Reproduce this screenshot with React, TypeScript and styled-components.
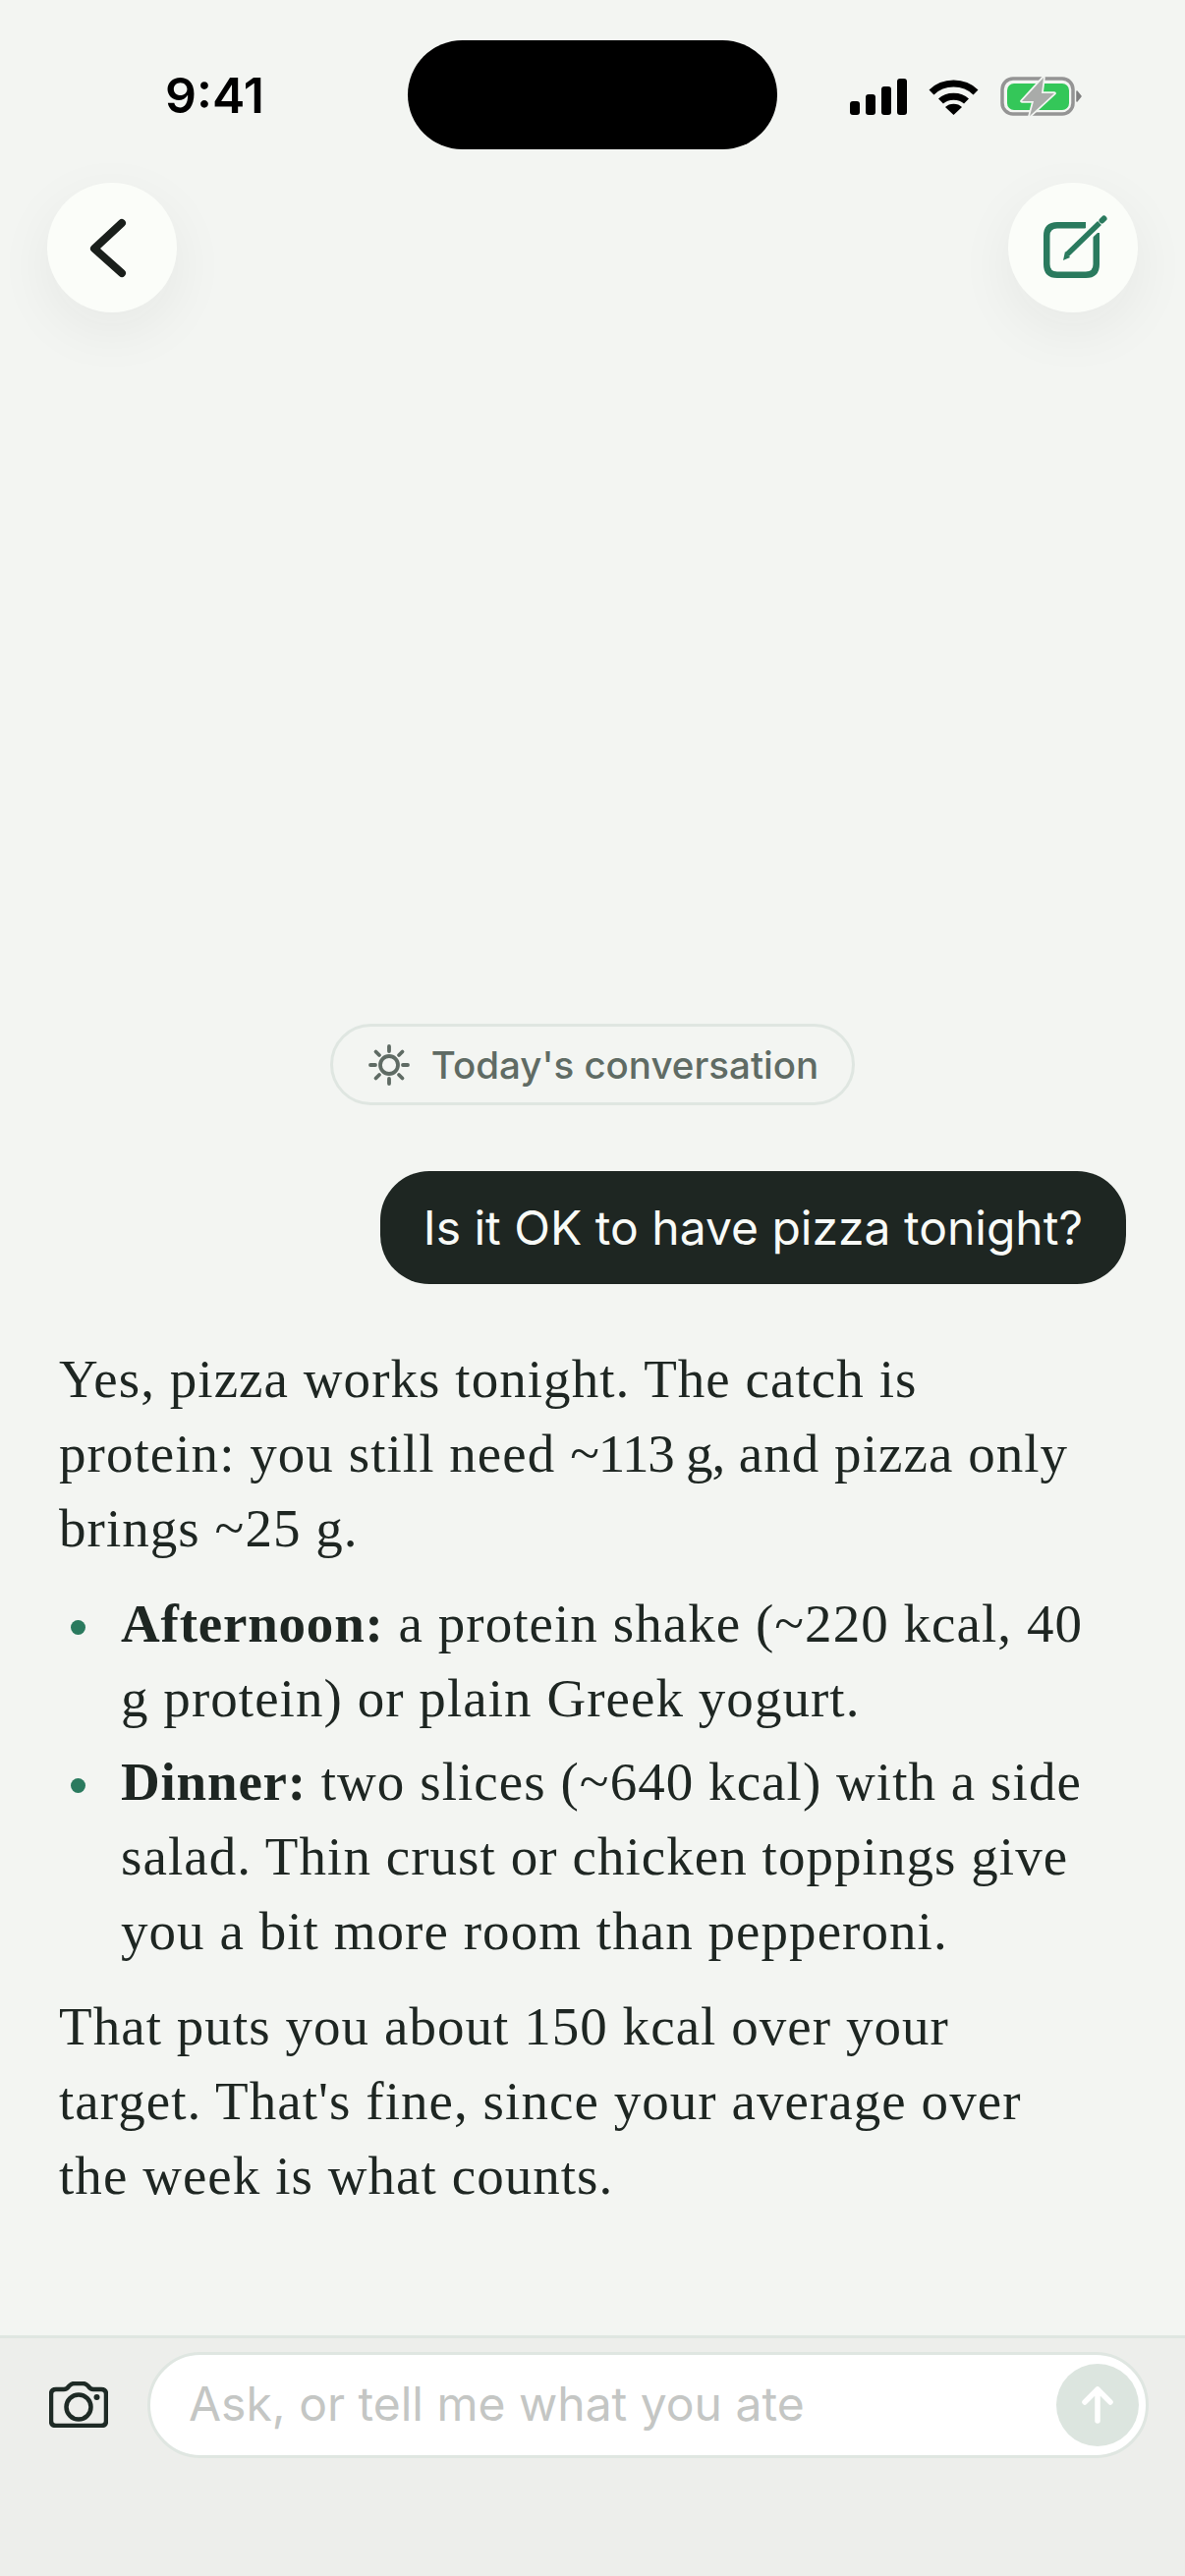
import * as React from 'react';
import styled, { createGlobalStyle } from 'styled-components';

const GlobalStyle = createGlobalStyle`
  html,
  body {
    margin: 0;
    padding: 0;
    background: #f3f5f2;
  }
`;

const Screen = styled.div`
  position: relative;
  display: flex;
  flex-direction: column;
  width: 1206px;
  height: 2622px;
  overflow: hidden;
  background: #f3f5f2;
  font-family: Inter, 'Noto Sans', sans-serif;
  color: #1e2622;
`;

const StatusBar = styled.div`
  display: flex;
  align-items: flex-start;
  justify-content: space-between;
  height: 186px;
  padding: 67px 104px 0 168px;
  box-sizing: border-box;
  flex-shrink: 0;
`;

const Time = styled.span`
  font-size: 50px;
  line-height: 60px;
  font-weight: 600;
  color: #000;
`;

const Island = styled.div`
  position: absolute;
  top: 41px;
  left: 415px;
  width: 376px;
  height: 111px;
  border-radius: 56px;
  background: #000;
`;

const StatusIcons = styled.div`
  display: flex;
  align-items: center;
  gap: 22px;
  margin-top: 10px;
`;

const Nav = styled.div`
  display: flex;
  justify-content: space-between;
  padding: 0 48px;
  flex-shrink: 0;
`;

const RoundButton = styled.button`
  display: flex;
  align-items: center;
  justify-content: center;
  width: 132px;
  height: 132px;
  padding: 0;
  border: 0;
  border-radius: 50%;
  background: #fbfdf9;
  box-shadow: 0 18px 60px rgba(30, 38, 34, 0.06);
`;

const Chat = styled.main`
  flex: 1;
  display: flex;
  flex-direction: column;
  justify-content: flex-end;
  padding: 0 60px 124px;
`;

const DayChip = styled.div`
  align-self: center;
  display: flex;
  align-items: center;
  gap: 21px;
  height: 83px;
  box-sizing: border-box;
  padding: 0 34px 0 35px;
  border: 3px solid #dfe6e1;
  border-radius: 42px;
  font-size: 38.5px;
  font-weight: 500;
  color: #5f6b64;
`;

const UserBubble = styled.div`
  align-self: flex-end;
  margin-top: 67px;
  height: 115px;
  padding: 0 44px;
  box-sizing: border-box;
  border-radius: 50px;
  background: #1e2622;
  color: #f8faf7;
  font-size: 48px;
  line-height: 115px;
`;

const Reply = styled.div`
  margin-top: 59px;
  font-family: 'Liberation Serif', 'Times New Roman', serif;
  font-size: 55px;
  line-height: 76px;
  letter-spacing: 1.05px;
  color: #1e2622;
`;

const Paragraph = styled.p`
  margin: 0;
`;

const Tight = styled.span`
  letter-spacing: -1.2px;
`;

const Bullets = styled.ul`
  margin: 21px 0 21px;
  padding: 0;
  list-style: none;
`;

const Bullet = styled.li`
  position: relative;
  padding-left: 63px;

  & + & {
    margin-top: 9px;
  }

  &::before {
    content: '';
    position: absolute;
    left: 12px;
    top: 34px;
    width: 15px;
    height: 15px;
    border-radius: 50%;
    background: #2a7a5e;
  }

  strong {
    letter-spacing: 0.8px;
  }
`;

const Composer = styled.footer`
  display: flex;
  align-items: flex-start;
  gap: 42px;
  height: 245px;
  box-sizing: border-box;
  flex-shrink: 0;
  padding: 14px 37px 0 50px;
  border-top: 3px solid #dfe6e1;
  background: #edeeeb;
`;

const CameraButton = styled.div`
  display: flex;
  margin-top: 30px;
  flex-shrink: 0;
`;

const InputPill = styled.div`
  flex: 1;
  display: flex;
  align-items: center;
  justify-content: space-between;
  height: 108px;
  box-sizing: border-box;
  margin-left: -2px;
  padding: 0 7px 0 39px;
  border: 3px solid #dfe6e1;
  border-radius: 54px;
  background: #fff;
`;

const Placeholder = styled.span`
  margin-bottom: 3px;
  font-size: 48px;
  color: #c4c6c4;
`;

const SendButton = styled.div`
  display: flex;
  align-items: center;
  justify-content: center;
  width: 84px;
  height: 84px;
  border-radius: 50%;
  background: #dce5df;
`;

const SignalIcon = () => (
  <svg width="58" height="37" viewBox="0 0 58 37" fill="#000">
    <rect x="0" y="23" width="10" height="14" rx="3" />
    <rect x="16" y="16" width="10" height="21" rx="3" />
    <rect x="32" y="8" width="10" height="29" rx="3" />
    <rect x="48" y="0" width="10" height="37" rx="3" />
  </svg>
);

const WifiIcon = () => (
  <svg width="51" height="37" viewBox="0 0 51 37" fill="none">
    <path d="M3 14 C15 2 36 2 48 14" stroke="#000" strokeWidth="7" />
    <path d="M12.5 23 C19 16.5 32 16.5 38.5 23" stroke="#000" strokeWidth="7" />
    <path d="M17 29 C21 24.5 30 24.5 34 29 L25.5 37 Z" fill="#000" />
  </svg>
);

const BatteryIcon = () => (
  <svg width="84" height="42" viewBox="0 0 84 42" fill="none">
    <rect x="2" y="3" width="72" height="36" rx="11" stroke="#949494" strokeWidth="3.5" />
    <rect x="7" y="8" width="63" height="27" rx="7" fill="#34c759" />
    <path d="M78 16 L82 21 L78 26 Z" fill="#7f7f7f" stroke="#7f7f7f" strokeWidth="1.5" strokeLinejoin="round" />
    <path
      d="M44 2 L22 26 L34 26 L30 41 L55 18 L42 18 Z"
      fill="#a9aba9"
      stroke="#f3f5f2"
      strokeWidth="3.5"
      strokeLinejoin="round"
      paintOrder="stroke"
    />
  </svg>
);

const BackIcon = () => (
  <svg width="132" height="132" viewBox="0 0 132 132" fill="none">
    <path d="M76 41 L48 67 L76 92" stroke="#1a1f1b" strokeWidth="8" strokeLinecap="round" strokeLinejoin="round" />
  </svg>
);

const ComposeIcon = () => (
  <svg width="132" height="132" viewBox="0 0 132 132" fill="none">
    <path
      d="M79 43.25 H50 Q39.25 43.25 39.25 54 V83 Q39.25 93.75 50 93.75 H79 Q89.75 93.75 89.75 83 V51"
      stroke="#2a7a5e"
      strokeWidth="6.5"
    />
    <path d="M60 72 L93 41" stroke="#fbfdf9" strokeWidth="12" />
    <path d="M60 73 L93 41" stroke="#2a7a5e" strokeWidth="5.5" />
    <path d="M58 70 L63 76 L56 79 Z" fill="#2a7a5e" />
    <path d="M95.5 38.5 L97.5 36.5" stroke="#2a7a5e" strokeWidth="6" strokeLinecap="round" />
  </svg>
);

const SunIcon = () => (
  <svg width="44" height="44" viewBox="0 0 44 44" fill="none" stroke="#5f6b64" strokeWidth="3.8" strokeLinecap="round">
    <circle cx="22" cy="22" r="9" />
    <path d="M22 3 V8 M22 36 V41 M3 22 H8 M36 22 H41 M8.5 8.5 L12 12 M32 32 L35.5 35.5 M8.5 35.5 L12 32 M32 12 L35.5 8.5" />
  </svg>
);

const CameraIcon = () => (
  <svg width="60" height="47" viewBox="0 0 60 47" fill="none">
    <path
      d="M7 8 H15 Q18 8 20 5 L21 4 Q23 2 26 2 H34 Q37 2 39 4 L40 5 Q42 8 45 8 H53 Q58 8 58 13 V40 Q58 45 53 45 H7 Q2 45 2 40 V13 Q2 8 7 8 Z"
      stroke="#1e2a25"
      strokeWidth="4.5"
    />
    <circle cx="30" cy="26" r="12.5" stroke="#1e2a25" strokeWidth="4.5" />
    <circle cx="48.5" cy="16" r="3" fill="#1e2a25" />
  </svg>
);

const ArrowIcon = () => (
  <svg width="40" height="44" viewBox="0 0 40 44" fill="none" stroke="#fff" strokeWidth="5.5" strokeLinecap="round" strokeLinejoin="round">
    <path d="M20 38 V6 M7 19 L20 6 L33 19" />
  </svg>
);

export default function App() {
  return (
    <Screen>
      <GlobalStyle />
      <Island />
      <StatusBar>
        <Time>9:41</Time>
        <StatusIcons>
          <SignalIcon />
          <WifiIcon />
          <BatteryIcon />
        </StatusIcons>
      </StatusBar>
      <Nav>
        <RoundButton>
          <BackIcon />
        </RoundButton>
        <RoundButton>
          <ComposeIcon />
        </RoundButton>
      </Nav>
      <Chat>
        <DayChip>
          <SunIcon />
          Today's conversation
        </DayChip>
        <UserBubble>Is it OK to have pizza tonight?</UserBubble>
        <Reply>
          <Paragraph>
            Yes, pizza works tonight. The catch is
            <br />
            protein: you still need <Tight>~113 g,</Tight> and pizza only
            <br />
            brings ~25 g.
          </Paragraph>
          <Bullets>
            <Bullet>
              <strong>Afternoon:</strong> a protein shake (~220 kcal, 40
              <br />g protein) or plain Greek yogurt.
            </Bullet>
            <Bullet>
              <strong>Dinner:</strong> two slices (~640 kcal) with a side
              <br />
              salad. Thin crust or chicken toppings give
              <br />
              you a bit more room than pepperoni.
            </Bullet>
          </Bullets>
          <Paragraph>
            That puts you about 150 kcal over your
            <br />
            target. That's fine, since your average over
            <br />
            the week is what counts.
          </Paragraph>
        </Reply>
      </Chat>
      <Composer>
        <CameraButton>
          <CameraIcon />
        </CameraButton>
        <InputPill>
          <Placeholder>Ask, or tell me what you ate</Placeholder>
          <SendButton>
            <ArrowIcon />
          </SendButton>
        </InputPill>
      </Composer>
    </Screen>
  );
}
